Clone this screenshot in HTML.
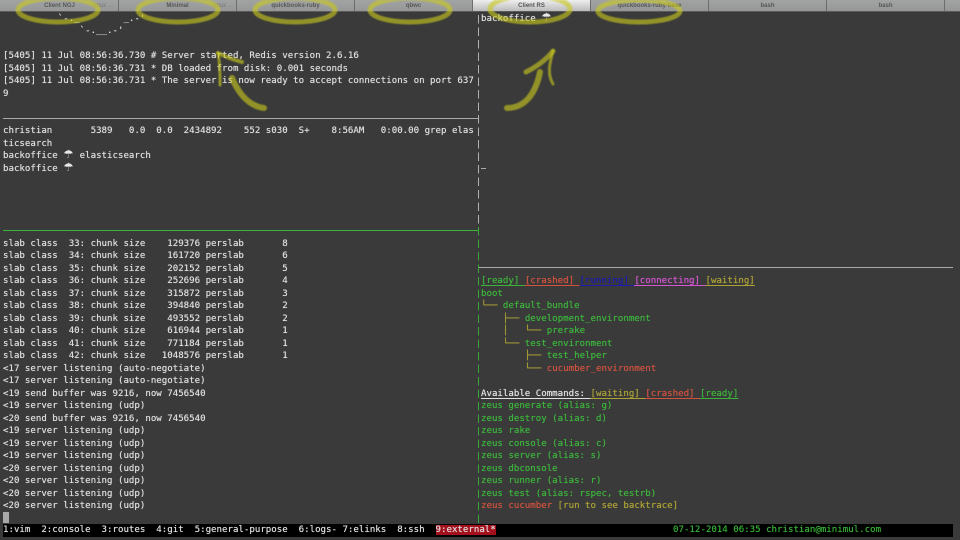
<!DOCTYPE html>
<html><head><meta charset="utf-8">
<style>
html,body{margin:0;padding:0;background:#3a3a3a;}
#s{position:relative;width:960px;height:540px;overflow:hidden;background:#3a3a3a;}
pre{position:absolute;margin:0;font:9.1px/12.5px "DejaVu Sans Mono","Liberation Mono",monospace;color:#dedede;white-space:pre;filter:blur(.25px);text-shadow:0 0 .5px currentColor;}
.g{color:#3cb43c}.r{color:#d0523f}.y{color:#aca235}.b{color:#1c1cb0}.m{color:#d455d4}.w{color:#e2e2e2}
.u{text-decoration:underline;text-underline-offset:1.5px;}
.um{display:inline-block;width:5.48px;height:0;line-height:0;font-family:"DejaVu Sans",sans-serif;font-size:11.5px;text-shadow:none;color:#e8e8e8;}
.tabs{position:absolute;left:0;top:0;width:960px;height:11px;background:linear-gradient(#a2a4a4,#969898);border-bottom:1px solid #5a5a5a;}
.t{position:absolute;top:0;width:118px;height:11px;font:bold 6px/12px "Liberation Sans",sans-serif;color:#555;text-align:center;box-sizing:border-box;border-right:1px solid #6c6e6e;filter:blur(.2px);}
.bar{position:absolute;left:3px;top:524px;width:950px;height:13px;background:#000;}
.v{position:absolute;left:478px;width:1.4px;background:repeating-linear-gradient(#b0b0b0 0,#b0b0b0 8.5px,transparent 8.5px,transparent 12.5px);}
</style></head><body><div id="s">

<pre style="left:3px;top:0;">

          `-._        _.-'
              `-.__.-'

[5405] 11 Jul 08:56:36.730 # Server started, Redis version 2.6.16
[5405] 11 Jul 08:56:36.731 * DB loaded from disk: 0.001 seconds
[5405] 11 Jul 08:56:36.731 * The server is now ready to accept connections on port 637
9


christian       5389   0.0  0.0  2434892    552 s030  S+    8:56AM   0:00.00 grep elas
ticsearch
backoffice <span class="um">☂</span>  elasticsearch
backoffice <span class="um">☂</span>





slab class  33: chunk size    129376 perslab       8
slab class  34: chunk size    161720 perslab       6
slab class  35: chunk size    202152 perslab       5
slab class  36: chunk size    252696 perslab       4
slab class  37: chunk size    315872 perslab       3
slab class  38: chunk size    394840 perslab       2
slab class  39: chunk size    493552 perslab       2
slab class  40: chunk size    616944 perslab       1
slab class  41: chunk size    771184 perslab       1
slab class  42: chunk size   1048576 perslab       1
&lt;17 server listening (auto-negotiate)
&lt;17 server listening (auto-negotiate)
&lt;19 send buffer was 9216, now 7456540
&lt;19 server listening (udp)
&lt;20 send buffer was 9216, now 7456540
&lt;19 server listening (udp)
&lt;19 server listening (udp)
&lt;19 server listening (udp)
&lt;20 server listening (udp)
&lt;20 server listening (udp)
&lt;20 server listening (udp)
&lt;20 server listening (udp)</pre>

<pre style="left:481px;top:0;">

backoffice <span class="um">☂</span>




















<span class="u g">[ready] </span><span class="u r">[crashed] </span><span class="u b">[running] </span><span class="u m">[connecting] </span><span class="u y">[waiting]</span>
<span class="g">boot</span>
<span class="y">└──</span> <span class="g">default_bundle</span>
<span class="y">    ├──</span> <span class="g">development_environment</span>
<span class="y">    │   └──</span> <span class="g">prerake</span>
<span class="y">    └──</span> <span class="g">test_environment</span>
<span class="y">        ├──</span> <span class="g">test_helper</span>
<span class="y">        └──</span> <span class="r">cucumber_environment</span>

<span class="u w">Available Commands: </span><span class="u y">[waiting] </span><span class="u r">[crashed] </span><span class="u g">[ready]</span>
<span class="g">zeus generate (alias: g)</span>
<span class="g">zeus destroy (alias: d)</span>
<span class="g">zeus rake</span>
<span class="g">zeus console (alias: c)</span>
<span class="g">zeus server (alias: s)</span>
<span class="g">zeus dbconsole</span>
<span class="g">zeus runner (alias: r)</span>
<span class="g">zeus test (alias: rspec, testrb)</span>
<span class="r">zeus cucumber</span> <span class="y">[run to see backtrace]</span></pre>

<!-- cursor -->
<div style="position:absolute;left:3px;top:512px;width:5.5px;height:11px;background:#a8a8a8;"></div>

<!-- separators -->
<div style="position:absolute;left:3px;top:118px;width:475px;height:1.4px;background:#a8a8a8;"></div>
<div style="position:absolute;left:3px;top:230px;width:475px;height:1.2px;background:#3cb43c;"></div>
<div style="position:absolute;left:479px;top:267px;width:474px;height:1.4px;background:#a8a8a8;"></div>
<div style="position:absolute;left:481px;top:167.5px;width:5px;height:1.2px;background:#a8a8a8;"></div>
<div class="v" style="top:14.5px;height:210px;"></div>
<div class="v" style="top:227px;height:297px;background:repeating-linear-gradient(#37a637 0,#37a637 8.5px,transparent 8.5px,transparent 12.5px);"></div>

<!-- status bar -->
<div class="bar"></div>
<pre style="left:3px;top:524px;">1:vim  2:console  3:routes  4:git  5:general-purpose  6:logs- 7:elinks  8:ssh  <span style="background:#a3101c;color:#ddd;">9:external*</span></pre>
<pre class="g" style="left:673px;top:524px;color:#35b035;">07-12-2014 06:35 christian@minimul.com</pre>

<!-- tabs -->
<div class="tabs"></div>
<div class="t" style="left:1px;">Client NGJ</div>
<div class="t" style="left:119px;">Minimal</div>
<div class="t" style="left:237px;">quickbooks-ruby</div>
<div class="t" style="left:355px;">qbwc</div>
<div class="t" style="left:473px;background:linear-gradient(#eee,#bbb);">Client RS</div>
<div class="t" style="left:591px;">quickbooks-ruby-base</div>
<div class="t" style="left:709px;">bash</div>
<div class="t" style="left:827px;">bash</div>
<div class="t" style="left:93px;width:20px;border:0;font-weight:normal;color:#777;">tmux ...</div>
<div class="t" style="left:211px;width:24px;border:0;font-weight:normal;color:#777;">tmux ...</div>

<!-- annotations -->
<svg width="960" height="540" style="position:absolute;left:0;top:0;filter:blur(.5px);" fill="none" stroke="#c8c81e" stroke-opacity=".62" stroke-width="5" stroke-linecap="round">
<ellipse cx="58" cy="10" rx="40" ry="12"/>
<ellipse cx="178" cy="10" rx="40" ry="12"/>
<ellipse cx="295" cy="10" rx="40" ry="12"/>
<ellipse cx="410" cy="10" rx="40" ry="12"/>
<ellipse cx="530" cy="9" rx="40" ry="13"/>
<ellipse cx="639" cy="11" rx="41" ry="11"/>
<path d="M264 108 C248 106 238 92 232 78" stroke-width="6"/>
<path d="M218 53 C224 56 234 60 242 62" stroke-width="4"/>
<path d="M218 53 C220 64 220 74 220 85" stroke-width="3"/>
<path d="M507 108 C526 108 536 92 540 72" stroke-width="6"/>
<path d="M526 72 C536 67 546 60 553 51" stroke-width="5"/>
<path d="M553 51 C551 60 546 72 553 84" stroke-width="3"/>
</svg>
</div></body></html>
